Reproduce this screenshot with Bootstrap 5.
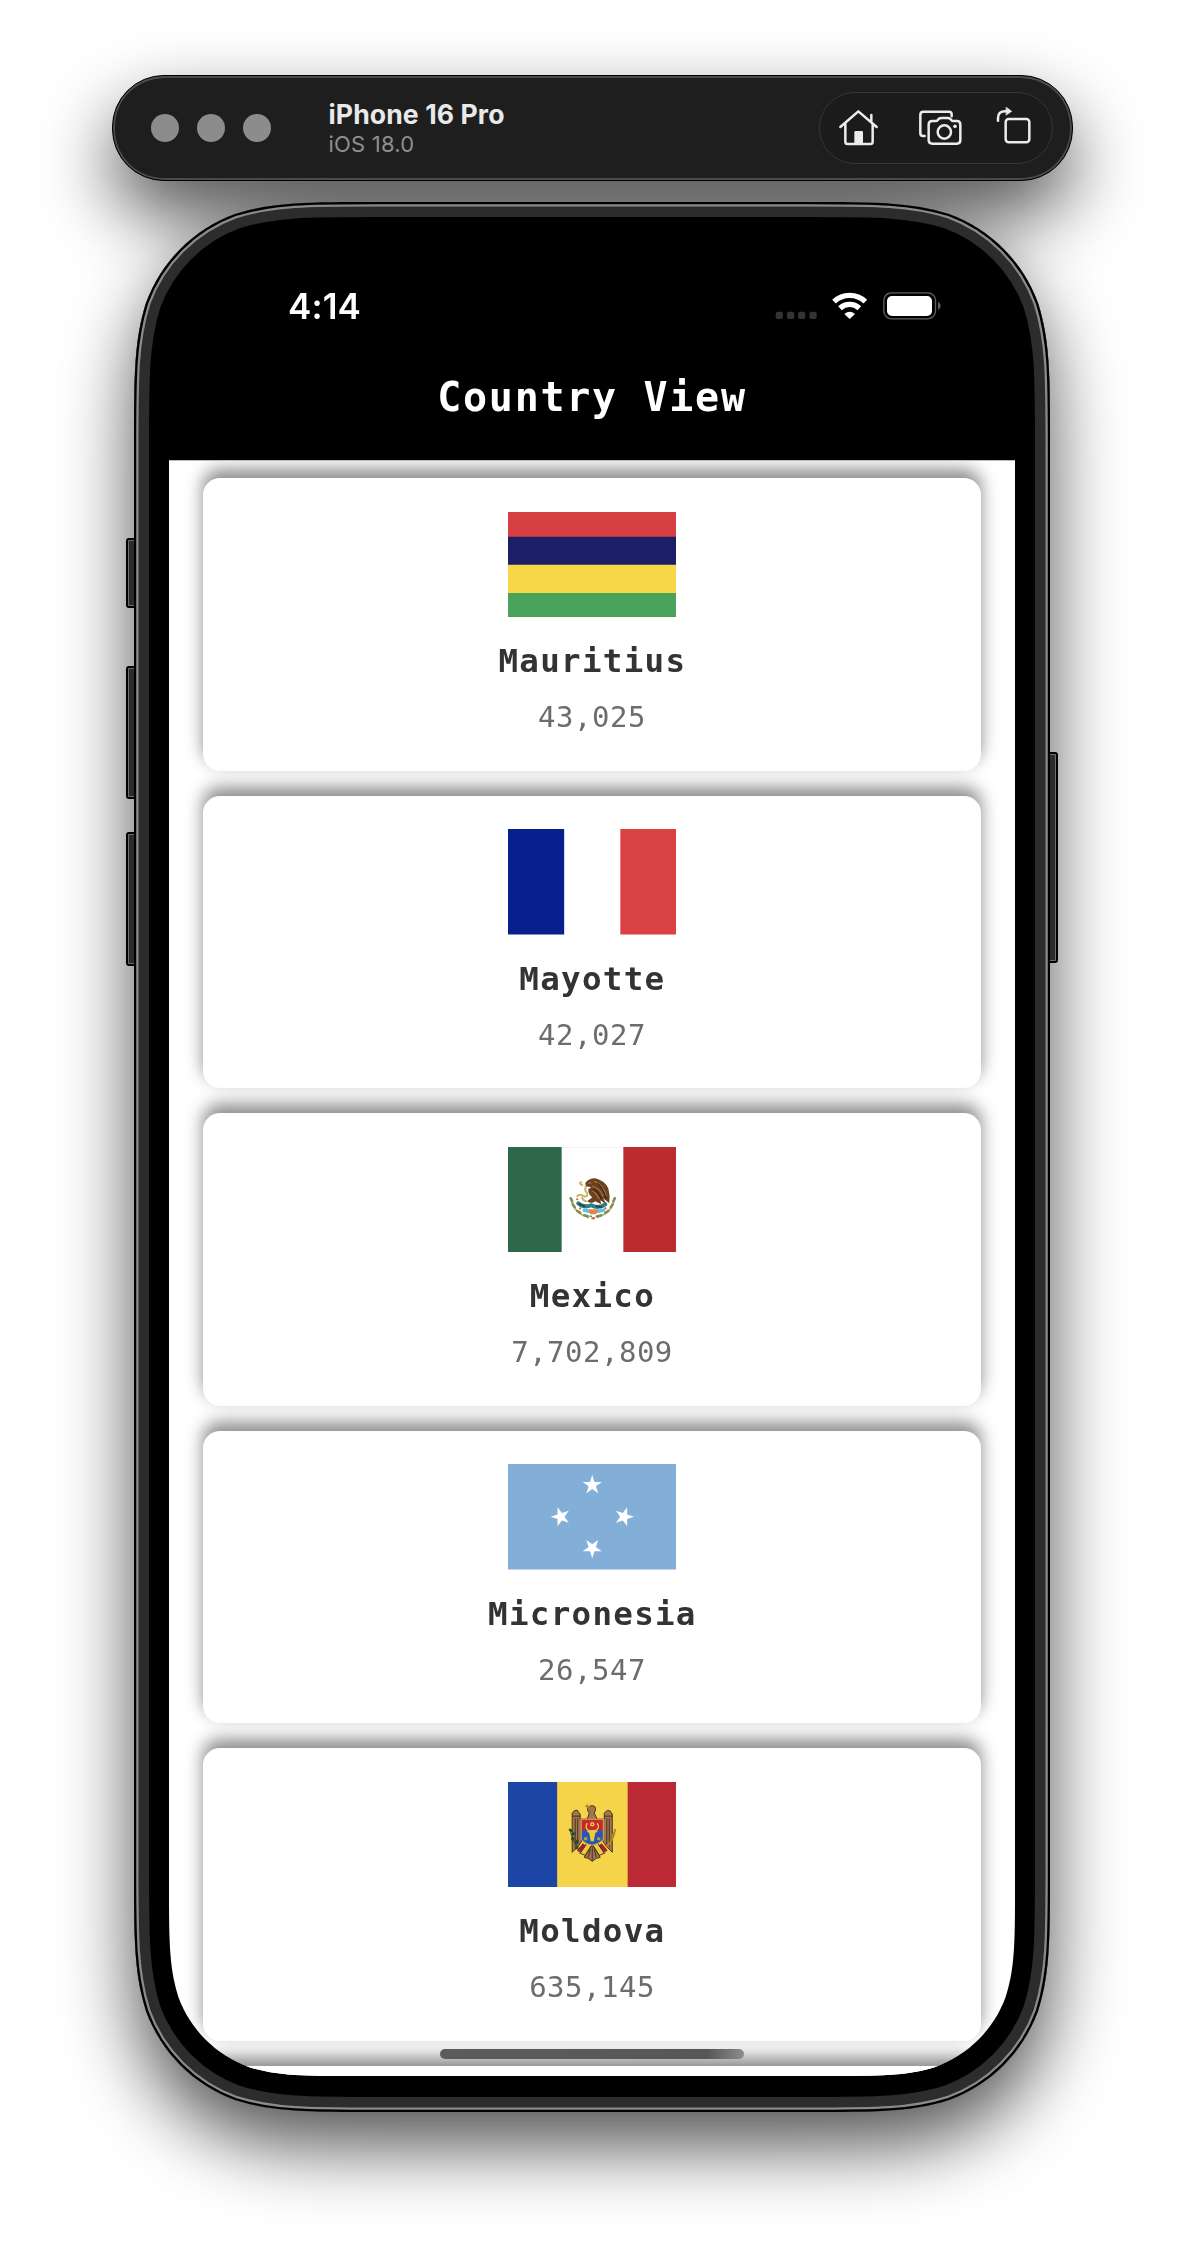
<!DOCTYPE html>
<html lang="en">
<head>
<meta charset="utf-8">
<meta name="viewport" content="width=device-width, initial-scale=1">
<title>Country View</title>
<link href="https://cdn.jsdelivr.net/npm/bootstrap@5.3.0/dist/css/bootstrap.min.css" rel="stylesheet">
<style>
  body { background: #fff; font-family: Inter, "Liberation Sans", sans-serif; }
  .stage { width: 1184px; height: 2262px; padding-top: 75px; }
  .stage-art { left: 0; top: 0; z-index: 0; }

  /* simulator toolbar */
  .sim-bar { width: 961px; height: 106px; border-radius: 52px; background: #1e1e1e; border: 1px solid #000;
    box-shadow: inset 0 0 0 2px #4a4a4a, inset 0 2px 0 #6c6c6c; padding: 0 19px 0 38px; z-index: 1; }
  .sim-dots { gap: 18px; }
  .sim-dots span { width: 28px; height: 28px; border-radius: 50%; background: #8c8c8c; }
  .sim-name { margin-left: 58px; line-height: 1; white-space: nowrap; }
  .sim-device { font-size: 26.6px; font-weight: 700; color: #e9e9e9; line-height: 31px; letter-spacing: .1px; }
  .sim-os { font-size: 22px; color: #8e8e8e; line-height: 28px; letter-spacing: .2px; }
  .sim-tools { width: 234px; height: 72px; border-radius: 36px; border: 1px solid #363636; background: #1b1b1b; }

  /* phone face */
  .phone { width: 846px; margin-top: 36px; z-index: 1; }
  .status { height: 109px; padding: 0 73px 0 119px; }
  .status-time { font-size: 35px; font-weight: 600; color: #fff; line-height: 40px; letter-spacing: .1px; }
  .mono-text { font-family: "DejaVu Sans Mono", "Liberation Mono", monospace; }
  .app-title { height: 134px; font-size: 40px; font-weight: 700; color: #fff; letter-spacing: 1.7px; line-height: 46px; padding-top: 48px; margin: 0; }
  .country-view { height: 1616px; background: #fff; padding: 17px 34px 0 33.5px; gap: 25px; overflow: hidden; border-top: 1px solid #bbb;
    clip-path: path("M0 0H846V1424.9C846 1479.9 846 1507.4 836.64 1537.06C824.87 1569.4 799.4 1594.87 767.06 1606.64C737.45 1616 709.94 1616 654.92 1616H191.08C136.06 1616 108.55 1616 78.94 1606.64C46.6 1594.87 21.13 1569.4 9.36 1537.06C0 1507.45 0 1479.94 0 1424.92Z"); }
  .country { flex: 0 0 292.5px; border: 0; border-radius: 17px; background: #fff; padding-top: 33.5px;
    box-shadow: 0 -8.4px 17px rgba(0,0,0,.46); }
  .country svg { width: 168.5px; height: 105.5px; display: block; }
  .country-name { font-size: 32.5px; font-weight: 700; color: #333; letter-spacing: 1.3px; line-height: 40px; margin: 24px -1.3px 0 0; }
  .country-num { font-size: 29px; color: #6c6c6c; letter-spacing: .5px; line-height: 36px; margin: 18px -.5px 0 0; }
  .home-bar { left: 271px; bottom: 17px; width: 304px; height: 10.5px; border-radius: 6px; z-index: 2;
    background: linear-gradient(90deg, #5c5c5c, #575757 88%, #8c8c8c); }
</style>
<script src="https://cdn.jsdelivr.net/npm/bootstrap@5.3.0/dist/js/bootstrap.bundle.min.js"></script>
</head>
<body>
<div class="stage position-relative d-flex flex-column align-items-center overflow-hidden">

  <!-- phone casing, side buttons and the shadow under the whole window -->
  <svg class="stage-art position-absolute" width="1184" height="2262" viewBox="0 0 1184 2262" aria-hidden="true">
    <defs>
      <filter id="drop" filterUnits="userSpaceOnUse" x="-100" y="-100" width="1384" height="2462">
        <feGaussianBlur stdDeviation="37"/>
      </filter>
      <path id="body" d="M244.6 0H671.4C741.8 0 777.1 0 814.96 11.99C856.35 27.05 888.95 59.65 904.01 101.04C916 138.9 916 174.2 916 244.6V1665.4C916 1735.8 916 1771.1 904.01 1808.96C888.95 1850.35 856.35 1882.95 814.96 1898.01C777.1 1910 741.8 1910 671.4 1910H244.6C174.2 1910 138.9 1910 101.04 1898.01C59.65 1882.95 27.05 1850.35 11.99 1808.96C0 1771.1 0 1735.8 0 1665.4V244.6C0 174.2 0 138.9 11.99 101.04C27.05 59.65 59.65 27.05 101.04 11.99C138.9 0 174.2 0 244.6 0Z"/>
      <clipPath id="bodyClip"><use href="#body"/></clipPath>
    </defs>
    <g filter="url(#drop)" opacity=".68" transform="translate(0 34)">
      <rect x="112" y="75" width="960" height="106" rx="52"/>
      <use href="#body" x="134" y="202"/>
    </g>
    <g fill="#2b2b2b" stroke="#000" stroke-width="2">
      <rect x="127" y="539" width="16" height="68" rx="2"/>
      <rect x="127" y="667" width="16" height="131" rx="2"/>
      <rect x="127" y="833" width="16" height="132" rx="2"/>
      <rect x="1041" y="753" width="16" height="209" rx="2"/>
    </g>
    <g fill="none" stroke="#6e6e6e" stroke-width="1">
      <path d="M136 540.5H128.5V605.5H136M136 668.5H128.5V796.5H136M136 834.5H128.5V963.5H136M1048 754.5H1055.5V960.5H1048"/>
    </g>
    <g transform="translate(134 202)">
      <g clip-path="url(#bodyClip)">
        <use href="#body"/>
        <use href="#body" fill="none" stroke="#2c2c2c" stroke-width="30"/>
        <use href="#body" fill="none" stroke="#8a8a8a" stroke-width="9"/>
        <use href="#body" fill="none" stroke="#000" stroke-width="4.4"/>
      </g>
    </g>
  </svg>

  <header class="sim-bar d-flex align-items-center position-relative">
    <div class="sim-dots d-flex"><span></span><span></span><span></span></div>
    <div class="sim-name">
      <div class="sim-device">iPhone 16 Pro</div>
      <div class="sim-os">iOS 18.0</div>
    </div>
    <div class="sim-tools ms-auto">
      <svg width="232" height="70" viewBox="687 129 696 210" fill="none" stroke="#ececec" stroke-width="7.5" stroke-linecap="round" stroke-linejoin="round">
        <path d="M748 231L802 184L857 231M763 222V275Q763 282 770 282H838Q845 282 845 275V222M841 212V195"/>
        <path d="M790 281V247Q790 243 794 243H812Q816 243 816 247V281Z" fill="#ececec" stroke="none"/>
        <path d="M1001 258H996Q988 258 988 250V194Q988 185 997 185H1074Q1082 185 1082 193V199"/>
        <path d="M1013 224Q1013 213 1024 213H1034Q1038 213 1041 209L1043 207Q1046 204 1051 204H1070Q1075 204 1078 207L1080 209Q1083 213 1087 213H1098Q1108 213 1108 224V271Q1108 281 1098 281H1024Q1013 281 1013 271Z"/>
        <circle cx="1060" cy="246" r="20"/>
        <circle cx="1092" cy="229" r="5.5" fill="#ececec" stroke="none"/>
        <rect x="1244" y="207" width="71" height="70" rx="9"/>
        <path d="M1221 212V204Q1221 184 1243 184H1246"/>
        <path d="M1246 172L1262 184L1246 195Z" fill="#ececec" stroke-width="2"/>
      </svg>
    </div>
  </header>

  <main class="phone position-relative">
    <div class="status d-flex align-items-end justify-content-between">
      <span class="status-time">4:14</span>
      <svg width="167" height="40" viewBox="555 705 501 120">
        <g fill="#333"><rect x="557" y="782" width="22" height="22" rx="6"/><rect x="591" y="782" width="22" height="22" rx="6"/><rect x="624" y="782" width="22" height="22" rx="6"/><rect x="658" y="782" width="22" height="22" rx="6"/></g>
        <g fill="none" stroke="#fff" stroke-width="16"><path d="M732 752A68 68 0 0 1 826 752"/><path d="M750 771.500A43 43 0 0 1 808 771.500"/></g>
        <path d="M779 804L763 789Q779 775 795 789Z" fill="#fff"/>
        <rect x="881.500" y="725.500" width="155" height="78" rx="23" fill="none" stroke="#606060" stroke-width="4"/>
        <rect x="891" y="735" width="135" height="60" rx="15" fill="#fff"/>
        <path d="M1044 752Q1052 757 1052 764.500Q1052 772 1044 777Z" fill="#606060"/>
      </svg>
    </div>
    <h1 class="app-title mono-text text-center">Country View</h1>

    <section class="country-view d-flex flex-column">
      <article class="card country align-items-center">
        <svg viewBox="0 0 168 105" preserveAspectRatio="none"><path fill="#d73e42" d="M0 0h168v25H0z"/><path fill="#1c1f66" d="M0 24.700h168v28H0z"/><path fill="#f7d748" d="M0 52.500h168v28H0z"/><path fill="#4aa35b" d="M0 80.500h168V105H0z"/></svg>
        <h2 class="country-name mono-text">Mauritius</h2>
        <p class="country-num mono-text">43,025</p>
      </article>

      <article class="card country align-items-center">
        <svg viewBox="0 0 168 105" preserveAspectRatio="none"><path fill="#fff" d="M0 0h168v105H0z"/><path fill="#08208e" d="M0 0h56v105H0z"/><path fill="#da4143" d="M112 0h56v105h-56z"/></svg>
        <h2 class="country-name mono-text">Mayotte</h2>
        <p class="country-num mono-text">42,027</p>
      </article>

      <article class="card country align-items-center">
        <svg viewBox="0 0 168 105" preserveAspectRatio="none">
          <path fill="#fff" d="M0 0h168v105H0z"/><path d="M53 .3h62M53 104.700h62" stroke="#f6e9e9" stroke-width=".7"/>
          <path fill="#2c6849" d="M0 0h53.500v105H0z"/><path fill="#bb2b30" d="M115 0h53v105h-53z"/>
          <g fill="none" stroke-linecap="round">
            <path d="M63 51Q65 66 80 70M106 51Q104 66 89 70" stroke="#b4b884" stroke-width="1.800"/>
            <path d="M62.500 51l1.500 3M64.500 57l2 3M69 63.500l3 2M76 68l3.500 1M106.500 51l-1.500 3M104.500 57l-2 3M100 63.500l-3 2M93 68l-3.500 1" stroke="#85904c" stroke-width="2.600"/>
            <path d="M74 38Q70 36 73 35M79 37Q75 43 79 46Q80 50 76 49Q71 46 69 49M78 54Q74 53 74 50" stroke="#c8b767" stroke-width="2"/>
            <path d="M70 56Q76 61 83 58Q90 62 97 57" stroke="#2f7f86" stroke-width="4"/>
            <path d="M71 57l5 2M88 59l5 1" stroke="#195058" stroke-width="2"/>
            <path d="M76 63l5 1M90 64l5-1" stroke="#66bfe0" stroke-width="3.500"/>
            <path d="M84 71h2" stroke="#d9464d" stroke-width="2"/><path d="M83 69h-1M88 69h1" stroke="#3e8b5a" stroke-width="1.500"/>
            <path d="M69 52v.1M97 61v.1M72 61v.1" stroke="#d94848" stroke-width="2"/>
          </g>
          <path fill="#6b421f" d="M77 36Q80 31 87 31Q96 33 100 41Q102 48 101 56L95 51L98 57L92 53L93 57L87 54Q83 57 79 54L84 50Q80 47 80 42L83 40L78 39Z"/>
          <path d="M86 34Q95 37 98 49M84 39Q92 41 95 49M84 44Q88 45 91 52M80 36h3" fill="none" stroke="#a8764a" stroke-width="1.100"/>
          <path d="M89 36Q95 41 98 52M85 42Q91 45 93 52" fill="none" stroke="#35200f" stroke-width="1"/>
          <path fill="#d98a4b" d="M80 62h10l-2 5h-6z"/>
        </svg>
        <h2 class="country-name mono-text">Mexico</h2>
        <p class="country-num mono-text">7,702,809</p>
      </article>

      <article class="card country align-items-center">
        <svg viewBox="0 0 168 105" preserveAspectRatio="none">
          <defs><path id="star" fill="#fff" d="M0-10L2.250-3.090L9.510-3.090L3.630 1.180L5.880 8.090L0 3.820L-5.880 8.090L-3.630 1.180L-9.510-3.090L-2.250-3.090Z"/></defs>
          <path fill="#83aed8" d="M0 0h168v105H0z"/>
          <use href="#star" transform="translate(84 21)"/><use href="#star" transform="translate(84 83.700) rotate(180)"/>
          <use href="#star" transform="translate(52.500 52.500) rotate(-90)"/><use href="#star" transform="translate(115.700 52.500) rotate(90)"/>
        </svg>
        <h2 class="country-name mono-text">Micronesia</h2>
        <p class="country-num mono-text">26,547</p>
      </article>

      <article class="card country align-items-center">
        <svg viewBox="0 0 168 105" preserveAspectRatio="none">
          <path fill="#1d45a6" d="M0 0h50v105H0z"/><path fill="#f6d44a" d="M49 0h71v105H49z"/><path fill="#bb2a35" d="M119.300 0H168v105h-48.700z"/>
          <g stroke="#3b2a1c" stroke-width=".9" stroke-linejoin="round">
            <path fill="#a27650" d="M64 70V31Q66 27.500 69 28L72 32V37H79L81 31Q78 27 80 25Q84 22 87 25Q88 28 86 31L89 37H96V31Q99 27 102 29L104 32V70L98 64L94 58H74L70 64Z"/>
            <path fill="none" d="M67 36V64M69.500 36V62M98.500 36V62M101 36V65M64 34h8M96 34h8"/>
            <path fill="#f0c93f" d="M79 60L72 71L77 73L84 62L91 73L96 71L89 60Z"/>
            <path fill="#a27650" d="M84 62L76 75L80 76L84 79L88 76L92 75Z"/>
            <path fill="none" d="M84 64V78M82 67L80 75M86 67L88 75"/>
          </g>
          <path d="M70 69l6-7M98 69l-6-7" stroke="#a51f2b" stroke-width="3.500"/>
          <path d="M71.500 71l6-8M96.500 71l-6-8" stroke="#3b2a1c" stroke-width=".8"/>
          <path fill="#2856b4" d="M73 37H95V57Q92 61 84 63Q76 61 73 57Z"/>
          <path fill="#c62832" d="M73 37H95V48H73Z"/>
          <path d="M73 37H95V57Q92 61 84 63Q76 61 73 57Z" fill="none" stroke="#d9a93c" stroke-width="1"/>
          <path d="M79 41Q76 46 81 48.500H87Q92 46 89 41" fill="none" stroke="#f0c93f" stroke-width="1.400"/>
          <path fill="#f0c93f" d="M78 48.500H90L87 51L85.500 59H82.500L81 51Z"/>
          <circle cx="84" cy="42" r="2.200" fill="#f0c93f"/><circle cx="84" cy="42" r=".8" fill="#a51f2b"/>
          <circle cx="77.500" cy="56.500" r="1.800" fill="#b5a04a"/><path d="M89 56l3 1" stroke="#b5a04a" stroke-width="2.500"/>
          <path d="M62 48Q64 58 70 65" fill="none" stroke="#2e5a35" stroke-width="1.200"/>
          <path d="M61 47l3 2M64 52l3-1M63 57l3-1M67 61l3-3M67 66l3-1" stroke="#1f4a2c" stroke-width="2.600"/>
          <path d="M107 47Q105 58 98 65M107 47l-2 7M103 54l3-3" fill="none" stroke="#a98a25" stroke-width="1.800"/>
          <path d="M77 24l5 1M79 22v4" stroke="#a98a25" stroke-width="1.200"/>
        </svg>
        <h2 class="country-name mono-text">Moldova</h2>
        <p class="country-num mono-text">635,145</p>
      </article>

      <article class="card country"></article>
    </section>
    <div class="home-bar position-absolute"></div>
  </main>
</div>
</body>
</html>
